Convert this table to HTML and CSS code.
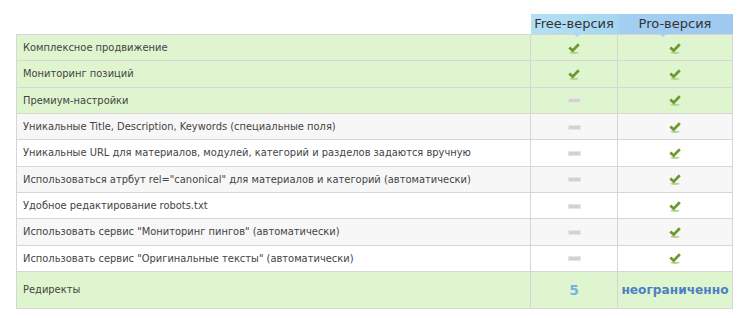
FILE: index.html
```html
<!DOCTYPE html>
<html lang="ru">
<head>
<meta charset="utf-8">
<link rel="stylesheet" href="styles.css">
</head>
<body>
<div class="wrap">
<table class="cmp">
<thead>
<tr>
<th class="blank"></th>
<th class="hd hd-free">Free-версия<span class="ptr"></span></th>
<th class="hd hd-pro">Pro-версия<span class="ptr"></span></th>
</tr>
</thead>
<tbody>
<tr class="g"><td class="name">Комплексное продвижение</td><td class="v"><span class="ok"></span></td><td class="v"><span class="ok"></span></td></tr>
<tr class="g"><td class="name">Мониторинг позиций</td><td class="v"><span class="ok"></span></td><td class="v"><span class="ok"></span></td></tr>
<tr class="g"><td class="name">Премиум-настройки</td><td class="v"><span class="no"></span></td><td class="v"><span class="ok"></span></td></tr>
<tr class="a"><td class="name">Уникальные Title, Description, Keywords (специальные поля)</td><td class="v"><span class="no"></span></td><td class="v"><span class="ok"></span></td></tr>
<tr class="w"><td class="name">Уникальные URL для материалов, модулей, категорий и разделов задаются вручную</td><td class="v"><span class="no"></span></td><td class="v"><span class="ok"></span></td></tr>
<tr class="a"><td class="name">Использоваться атрбут rel="canonical" для материалов и категорий (автоматически)</td><td class="v"><span class="no"></span></td><td class="v"><span class="ok"></span></td></tr>
<tr class="w"><td class="name">Удобное редактирование robots.txt</td><td class="v"><span class="no"></span></td><td class="v"><span class="ok"></span></td></tr>
<tr class="a"><td class="name">Использовать сервис "Мониторинг пингов" (автоматически)</td><td class="v"><span class="no"></span></td><td class="v"><span class="ok"></span></td></tr>
<tr class="w"><td class="name">Использовать сервис "Оригинальные тексты" (автоматически)</td><td class="v"><span class="no"></span></td><td class="v"><span class="ok"></span></td></tr>
<tr class="g last"><td class="name">Редиректы</td><td class="v num">5</td><td class="v unl">неограниченно</td></tr>
</tbody>
</table>
</div>
</body>
</html>
```
FILE: styles.css
```css
html, body { margin: 0; padding: 0; background: #fff; }
body { font-family: "DejaVu Sans", Verdana, sans-serif; color: #444; }
.wrap { padding: 14px 0 0 16px; }
.cmp { border-collapse: collapse; width: 717px; table-layout: fixed; }
.cmp th { padding: 0; }
.blank { width: 514px; border: none; background: transparent; }
.hd {
  position: relative;
  height: 20px;
  font-weight: normal;
  font-size: 13px;
  color: #333;
  text-align: center;
  vertical-align: middle;
  line-height: 20px;
}
.hd-free { width: 87px; background: linear-gradient(to right, #b3e0f4, #a6d7f1); }
.hd-pro { background: linear-gradient(to right, #a3cff2, #9fc9f0); }
.ptr {
  position: absolute;
  bottom: -3px;
  width: 0; height: 0;
  border-left: 4px solid transparent;
  border-right: 4px solid transparent;
  border-top: 4px solid #a8d9f2;
}
.hd-free .ptr { left: 42px; }
.hd-pro .ptr { left: 41px; border-top-color: #a3cff2; }
.cmp td {
  border: 1px solid #d6d6d6;
  height: 25.33px;
  padding: 0 6px;
  font-family: "DejaVu Sans Condensed", "DejaVu Sans", sans-serif;
  font-stretch: condensed;
  font-size: 11px;
  vertical-align: middle;
}
.g td { background: #dff5cf; }
.a td { background: #f7f7f7; }
.w td { background: #fff; }
.last td { height: 36px; }
.v { text-align: center; }
.ok {
  display: inline-block;
  width: 12px; height: 11px;
  vertical-align: middle;
  background:
    url("data:image/svg+xml;utf8,<svg xmlns='http://www.w3.org/2000/svg' width='12' height='11'><ellipse cx='6' cy='9.8' rx='4.5' ry='1.1' fill='%23b4d296'/><path d='M1.3 4.6 L4.6 7.6 L10.8 1.3' fill='none' stroke='%236b9a2c' stroke-width='2.7'/></svg>") no-repeat;
}
.no {
  display: inline-block;
  width: 11px; height: 3px;
  vertical-align: middle;
  background: #d2d2d2;
  box-shadow: 0 0 0 1px #e6e6e6;
}
.cmp td.num { font-family: "DejaVu Sans", sans-serif; font-stretch: normal; font-weight: bold; font-size: 14px; color: #73b4e4; }
.cmp td.unl { font-family: "DejaVu Sans", sans-serif; font-stretch: normal; font-weight: bold; font-size: 12.2px; color: #4d7fc3; padding: 0; }
```
